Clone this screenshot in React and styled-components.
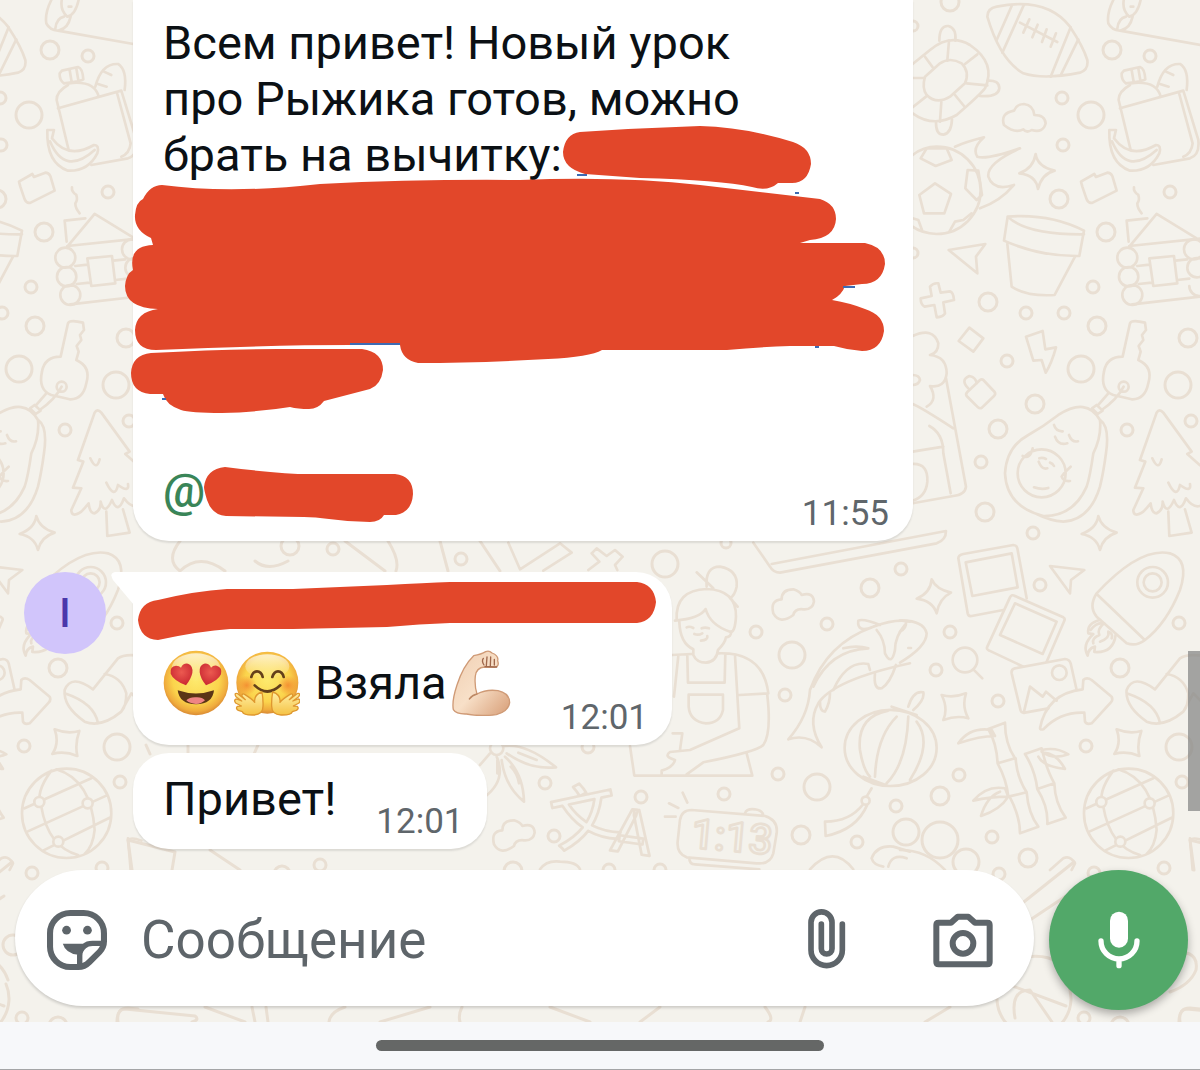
import React, { useState } from "react";
import styled, { createGlobalStyle } from "styled-components";

const GlobalStyle = createGlobalStyle`
  * {
    box-sizing: border-box;
  }

  body {
    margin: 0;
    font-family: Roboto, "Noto Sans", sans-serif;
    color: #0b1014;
  }

  button {
    padding: 0;
    border: 0;
    background: none;
    cursor: pointer;
  }

  svg {
    display: block;
  }
`;

const Screen = styled.div`
  display: flex;
  flex-direction: column;
  min-height: 100vh;
`;

const Chat = styled.main`
  position: relative;
  flex: 1;
  display: flex;
  flex-direction: column;
  justify-content: space-between;
  gap: 20px;
  overflow: hidden;
  background-color: #f4f2ec;
`;

const WallpaperSvg = styled.svg`
  position: absolute;
  inset: 0;
  width: 100%;
  height: 100%;
  fill: none;
  stroke: #e9dfd3;
  stroke-width: 8;
  stroke-linecap: round;
  stroke-linejoin: round;
`;

const ScrollThumb = styled.div`
  position: absolute;
  right: 0;
  top: 651px;
  width: 12px;
  height: 160px;
  background-color: rgba(128, 130, 130, 0.7);
`;

const Messages = styled.section`
  position: relative;
  display: flex;
  flex-direction: column;
  padding: 0 24px;
`;

const MessageRow = styled.article`
  display: grid;
  grid-template-columns: 82px minmax(0, 1fr);
  gap: 27px;
  margin-top: ${(props) => props.$space || "0"};
`;

const Avatar = styled.div`
  display: flex;
  align-items: center;
  justify-content: center;
  width: 82px;
  height: 82px;
  border-radius: 50%;
  font-size: 40px;
  font-weight: 500;
  color: #4a37ab;
  background-color: #d1c5fb;
`;

const Bubble = styled.div`
  position: relative;
  grid-column: 2;
  width: ${(props) => (props.$wide ? "100%" : "fit-content")};
  max-width: 780px;
  padding: ${(props) => props.$top || "0"} 24px 6px 30px;
  border-radius: ${(props) => props.$corners || "36px"};
  background-color: #fff;
  box-shadow: 0 2px 2px rgba(0, 0, 0, 0.1);
`;

const Tail = styled.svg`
  position: absolute;
  left: -22px;
  top: 0;
`;

const Paragraph = styled.p`
  max-width: 600px;
  min-height: 448px;
  margin: 0;
  font-size: 47px;
  line-height: 56px;
`;

const Line = styled.div`
  display: flex;
  align-items: flex-end;
  justify-content: space-between;
  gap: 40px;
`;

const Text = styled.div`
  display: flex;
  align-items: center;
  align-self: flex-start;
  gap: 5px;
  padding-bottom: ${(props) => (props.$tall ? "23px" : "16px")};
  font-size: 47px;
  line-height: 56px;
`;

const Word = styled.span`
  margin-left: ${(props) => (props.$indent ? "10px" : "0")};
`;

const Mention = styled.a`
  font-weight: 500;
  color: #3a8558;
  text-decoration: none;
`;

const Time = styled.time`
  font-size: 35px;
  line-height: 42px;
  color: #5f666b;
`;

const Sender = styled.div`
  width: 485px;
  height: 78px;
`;

const Scribble = styled.svg`
  position: absolute;
  left: 0;
  top: 0;
  overflow: visible;
  fill: #e2472a;
`;

const Composer = styled.form`
  position: relative;
  display: flex;
  align-items: flex-start;
  gap: 15px;
  padding: 0 12px 12px 15px;
`;

const InputPill = styled.div`
  flex: 1;
  display: flex;
  align-items: center;
  min-width: 0;
  height: 136px;
  padding: 4px 41px 0 32px;
  border-radius: 68px;
  background-color: #fff;
  box-shadow: 0 2px 3px rgba(0, 0, 0, 0.16);
`;

const MessageInput = styled.input`
  flex: 1;
  min-width: 0;
  height: 80px;
  margin: 0 32px 0 34px;
  padding: 0;
  border: 0;
  outline: 0;
  font-family: inherit;
  font-size: 53px;
  color: #0b1014;
  background: transparent;

  &::placeholder {
    color: #5e656a;
    opacity: 1;
  }
`;

const PillActions = styled.div`
  display: flex;
  align-items: center;
  gap: 87px;
`;

const IconButton = styled.button`
  color: #5e656a;
`;

const MicButton = styled.button`
  display: flex;
  align-items: center;
  justify-content: center;
  width: 139px;
  height: 140px;
  border-radius: 50%;
  color: #fff;
  background-color: #52a869;
  box-shadow: 0 4px 8px rgba(0, 0, 0, 0.3);
`;

const SystemBar = styled.footer`
  display: flex;
  align-items: center;
  justify-content: center;
  height: 48px;
  border-bottom: 1px solid #a4a5a6;
  background-color: #f7f8fa;
`;

const HomeHandle = styled.div`
  width: 448px;
  height: 11px;
  border-radius: 6px;
  background-color: #656766;
`;

// x, y, radius
const BUBBLES = [
  [950, 2, 9], [913, 26, 5], [1112, 50, 9], [1150, 56, 6], [1062, 98, 6],
  [1091, 115, 13], [1063, 145, 6], [1059, 199, 9], [1170, 192, 6],
  [1106, 232, 9], [913, 253, 5], [1093, 287, 6], [988, 302, 9],
  [1026, 313, 6], [1064, 313, 6], [1097, 326, 9], [1188, 338, 9],
  [1007, 361, 6], [1081, 369, 13], [1178, 385, 13], [1035, 404, 9],
  [998, 429, 9], [1127, 430, 6], [1191, 421, 6], [981, 462, 6],
  [985, 512, 9], [1033, 533, 6], [901, 569, 6], [1040, 585, 6],
  [950, 632, 6], [1179, 623, 6], [936, 670, 6], [998, 701, 6],
  [1120, 668, 9], [1086, 746, 6], [1179, 747, 13], [959, 775, 6],
  [940, 796, 9], [1182, 782, 6], [992, 837, 6], [1028, 858, 9],
  [906, 832, 13], [940, 840, 18], [966, 862, 13], [665, 564, 13],
  [726, 543, 5], [870, 588, 9], [756, 632, 6], [827, 624, 6],
  [792, 655, 13], [785, 695, 6], [588, 747, 6], [545, 783, 6],
  [641, 797, 6], [724, 794, 6], [778, 774, 6], [817, 787, 13],
  [554, 836, 6], [801, 835, 9], [857, 842, 6], [896, 806, 6],
  [513, 871, 9], [609, 870, 6], [660, 870, 6], [290, 546, 9],
  [333, 549, 6], [461, 559, 6], [320, 865, 6], [282, 874, 8],
  [999, 874, 6], [1164, 868, 6], [1094, 873, 6], [1084, 1018, 6],
  [1120, 1026, 9], [1075, 945, 10],
];

const TOP_DOODLES = [
  // football
  "M262 50Q262 25 290 20Q440-10 510 80Q550 140 562 180Q566 210 540 218Q430 240 370 220Q300 180 262 50z",
  "M335 18L290 120M372 14L307 158M512 82L452 230M535 118L482 226",
  "M360 68L472 126M388 58l-18 40M413 74l-16 38M440 88l-14 38M468 100l-16 40",
  // turtle
  "M38 192L90 150Q150 100 210 135Q290 190 255 265Q240 285 170 345Q100 385 38 340",
  "M75 230L120 190Q150 170 185 190Q210 215 195 250L150 290Q110 315 80 285Q65 265 75 230z",
  "M147 122L142 182M75 170L98 202M232 163L195 192M200 250L262 256M165 285L192 318M124 306L120 365M38 322L78 290M38 234H70",
  "M118 122Q118 76 145 78Q170 85 166 122M262 242Q298 240 298 265Q295 292 240 288M108 368Q108 404 130 404Q154 400 156 358",
  // cloud
  "M312 375Q300 340 342 332Q350 312 372 312Q400 315 403 345Q435 345 437 370Q430 400 395 390Q380 400 370 388Q345 402 312 375z",
  // burning ball
  "M38 465Q70 440 110 440A132 131 0 0 1 110 702Q65 700 38 680",
  "M58 585L105 550L153 582L133 640H72zM62 475L80 445H140L155 480L107 498zM203 510L235 512L246 585L230 600L196 565zM148 695L165 665L190 660L215 640M38 655L55 660L66 690",
  "M165 440Q200 425 252 412Q215 445 232 470Q260 480 360 445Q260 490 265 530Q280 575 342 555Q300 605 240 625",
  "M407 462Q412 500 464 512Q425 522 414 567Q408 525 358 520Q400 505 407 462z",
  // brick
  "M547 560L543 545L583 522L588 531L622 518Q632 518 637 528L650 572L578 608Q566 612 560 598z",
  // pot
  "M323 650Q450 640 552 692L538 768Q420 770 312 722zM323 650Q380 705 552 703M322 732L335 860Q380 890 464 885L525 770",
  "M146 750L256 732L228 770L232 820z",
  // bag with bottle and bread
  "M672 212L720 201Q734 205 736 238Q732 242 678 250Q664 240 665 220zM695 210l6 36M715 205l6 36",
  "M690 255Q655 275 656 300L692 450M692 250Q770 240 782 290M660 325L850 272L895 420Q900 465 870 475L760 495M838 282L878 430Q875 460 850 470",
  "M772 260Q790 190 840 192Q868 210 860 270M798 215l22 10M780 252l26 8",
  "M628 390H648L642 415Q690 480 768 435Q785 435 778 460Q750 515 690 512Q625 490 628 390zM636 424Q680 530 770 450",
  "M702 562Q700 575 715 585Q720 600 712 610Q712 625 725 640",
  // log cabin
  "M688 740L770 642L890 715M688 738L900 716M680 662L742 655M680 662L686 725M712 798L748 794M748 775L822 768L832 850L760 858zM826 782L862 778M716 852L755 848M832 840L868 836M697 913L915 888",
  "M652 773a30 30 0 1 0 60 0a30 30 0 1 0-60 0M657 830a29 29 0 1 0 58 0a29 29 0 1 0-58 0M667 885a30 30 0 1 0 60 0a30 30 0 1 0-60 0M852 748a30 30 0 1 0 60 0a30 30 0 1 0-60 0M862 803a29 29 0 1 0 58 0a29 29 0 1 0-58 0M868 858a30 30 0 1 0 60 0",
  // sandwich
  "M640 0Q620 40 625 70Q635 90 660 92L920 138M672-4Q665 30 688 50Q712 45 722 0M652 86Q655 55 678 50M665 90Q690 85 698 50M692 20h8",
];

const MIDDLE_DOODLES = [
  "M90 80Q100 68 115 70L122 98L150 94Q160 96 162 120L130 127L135 160Q130 170 110 172L103 135L74 140Q62 135 62 115L95 108z",
  "M208 203L250 235L220 275L176 243z",
  "M378 230L428 213L436 268L468 262Q455 310 437 338L425 300L400 302z",
  "M250 360L284 396Q288 402 282 408L246 443Q240 447 234 442L200 408Q196 402 202 396L240 360Q245 356 250 360M205 385Q180 360 208 348Q228 352 230 370",
  // chef house
  "M38 228Q100 200 115 250Q115 280 90 285Q140 290 140 340Q135 385 90 378Q115 420 80 440M38 432Q60 440 160 505M138 355L198 680Q195 705 160 708L38 730",
  "M88 498Q130 520 130 580L152 700M38 575L130 560M38 612Q85 610 82 665Q78 710 38 722M38 345q20 0 22 15q-5 15-22 15",
  // avocado
  "M475 465Q560 410 600 480Q605 530 580 580Q570 650 560 680Q520 770 430 768Q320 740 315 640Q320 560 385 525Q430 500 475 465zM600 480Q630 500 618 580Q610 640 600 680Q570 780 490 785Q450 782 410 762",
  "M353 640a72 72 0 1 0 144 0a72 72 0 1 0-144 0M368 588Q390 600 398 565M512 620Q490 640 485 650Q490 665 510 663M402 682Q425 690 445 684M416 605Q425 630 442 625M418 595q10-3 20 2M450 608q8 2 12 10M462 495Q468 515 488 514M465 530Q475 558 502 550M507 525Q515 548 534 544",
  // key
  "M668 290L690 190Q695 178 735 188L738 210L726 225L730 240L716 258L722 275L715 300Q760 320 745 370Q735 420 695 418L640 405Q600 390 612 335Q620 290 668 290zM656 380a15 15 0 1 0 30 0a15 15 0 1 0-30 0M671 380Q650 420 605 450M625 400L595 435M590 435L608 452L593 462L576 445z",
  // fir
  "M900 616L862 582L875 575L790 458Q778 444 770 458L720 600L736 605L705 683L730 685L700 750Q700 775 730 755Q740 745 752 730Q755 760 770 760Q790 750 788 725Q800 770 822 720Q840 765 858 715Q880 745 900 738M805 755L808 828L875 818L855 748M757 595Q775 635 785 598M805 668Q830 720 840 675Q875 700 870 672",
  "M595 768Q605 805 650 818Q610 830 600 870Q590 830 545 822Q590 805 595 768z",
];

const BOTTOM_DOODLES = [
  "M-440 38L-390 110Q-380 128-360 128L110 40Q138 30 138 3L-385 102",
  // photos
  "M310 240L215 258Q205 260 203 250L175 85Q175 75 190 72L340 45Q350 45 352 55L380 205M197 97L335 70L353 172L217 198z",
  "M345 198L490 262Q496 265 493 272L440 395M345 198Q335 192 330 202L262 350Q258 358 268 362L370 410M345 220L470 275L428 372L300 315z",
  "M445 535L375 548Q365 550 362 542L335 430Q333 418 345 415L495 387Q508 388 512 400L530 480M372 545L390 470L428 500L438 485L470 512M456 428a22 22 0 1 0 44 0a22 22 0 1 0-44 0",
  "M420 595Q440 490 548 478L550 450Q560 440 575 450L635 500Q640 510 632 518L575 580Q560 585 555 575L553 548Q480 545 430 598Q420 600 420 595z",
  "M450 108L553 120L513 150L510 190z",
  "M95 148Q108 178 153 188Q118 205 110 250Q98 212 50 206Q92 188 95 148z",
  "M125 495Q160 505 198 490Q185 530 205 565Q170 555 130 570Q145 535 125 495zM650 598Q688 613 724 603Q710 642 718 678Q680 662 643 672Q665 640 650 598z",
  // rocket
  "M590 190Q720 50 810 70Q870 90 840 180Q800 280 735 330Q710 350 680 340L590 260Q565 230 590 190zM590 192L732 328M712 157a46 46 0 1 0 92 0a46 46 0 1 0-92 0M731 157a27 27 0 1 0 54 0a27 27 0 1 0-54 0",
  "M600 270Q560 280 565 310L580 312Q545 345 563 377Q565 355 585 350L583 366Q640 370 647 315M572 300Q590 275 612 280Q590 300 598 315Q575 325 580 340M600 335Q630 325 625 305Q640 310 635 325",
  // boot
  "M910 378Q860 370 840 385L765 478Q700 430 680 480Q675 530 740 575Q790 595 850 545L880 490L910 520M680 490Q770 520 780 580M800 432Q850 440 865 490Q865 530 850 545",
  "M158 390a37 37 0 1 0 74 0a37 37 0 1 0-74 0M220 418L247 445",
  "M0 272Q70 270 80 310Q80 350 0 398M0 305Q20 295 18 275M25 354h8",
  // bamboo
  "M265 597L315 578Q315 640 345 685L293 700Q290 640 265 597zM293 700Q320 750 325 800L380 787Q350 740 347 685M330 802Q360 860 360 910L415 890Q385 850 380 787M175 640Q210 590 275 600L285 618Q240 618 175 640z",
  "M375 672L425 655Q440 720 463 760L412 777Q405 720 375 672zM412 777Q445 830 442 882L497 863Q465 820 463 760M425 660Q470 650 505 673Q460 690 425 665M415 680Q430 710 495 717Q470 670 430 668M220 812Q260 765 315 775L325 800Q270 800 220 812zM325 800Q300 840 243 858Q260 800 300 785",
  // globe
  "M552 850a134 134 0 1 0 268 0a134 134 0 1 0-268 0M560 835L760 745M568 905L805 797M615 962L818 862M640 722Q590 790 610 830Q630 950 720 975M655 718Q760 750 770 900Q765 950 740 972",
  "M450 1020L490 985Q510 975 525 1000L515 1020M870 930Q880 920 910 932M870 925L878 1020M0 960Q80 960 135 1020",
];

const CENTER_DOODLES = [
  // barista
  "M680 170Q675 110 720 110Q775 120 770 170Q765 195 750 205M650 127L700 175M755 210l18 20M590 270Q585 180 680 177Q770 180 768 260Q765 310 750 305Q690 285 677 237Q660 265 585 272",
  "M598 275Q600 340 640 358V375Q650 398 678 398Q710 395 714 360Q735 340 738 322Q755 320 753 305M643 312q12 5 24-2M682 318Q685 330 663 332M620 292q8-4 20 2M665 295q10-4 22 0",
  "M576 375L635 372M715 370Q850 365 865 490L778 495M862 495Q875 610 850 645Q830 665 670 697L620 733M765 375L778 595L630 660L570 666Q550 680 585 690Q580 712 545 722V733M595 378L582 500M622 378L624 458H734L736 372M626 494H729V540Q720 580 678 580Q630 575 626 530zM450 648L463 737H817L800 670M578 610H607L600 660",
  // clouds
  "M880 250Q870 210 905 208Q905 178 940 178Q960 185 965 195Q1000 185 1002 215Q998 240 970 238Q945 235 940 255Q900 285 880 250z",
  "M42 943Q32 903 67 901Q67 871 102 871Q122 878 127 888Q162 878 164 908Q160 933 132 931Q107 928 102 948Q62 978 42 943z",
  // flower
  "M30 655a20 20 0 1 0 40 0a20 20 0 1 0-40 0M75 648Q140 640 228 712Q150 720 80 670M115 668L170 690M50 680Q80 750 15 800M52 690V730M75 680Q130 730 132 815Q75 770 65 690M92 710q20 20 25 50M30 670L0 705",
  // koi
  "M925 628Q985 560 990 480Q1040 340 1180 290Q1250 265 1290 275M925 628Q980 610 1025 652Q980 580 1015 520Q1060 450 1290 400M1180 290Q1130 310 1135 272Q1150 265 1200 285M1090 355Q1130 345 1165 355Q1050 360 1000 470",
  "M1185 430Q1180 480 1205 475Q1230 460 1248 405M1190 300Q1215 330 1215 370Q1235 410 1245 360Q1245 320 1275 285M1020 515Q1020 545 1035 545Q1050 520 1050 490M1060 480Q1100 390 1165 402L1170 420",
  // lantern
  "M1094 654a138 114 0 1 0 276 0a138 114 0 1 0-276 0M1225 542Q1130 560 1140 660Q1150 720 1170 740M1250 560Q1190 620 1185 740M1285 560Q1280 700 1220 760M1310 575Q1360 640 1290 750M1235 530L1310 555M1150 740L1225 768M1285 530Q1300 480 1330 487Q1335 510 1300 540",
  "M1175 775L1160 800M1145 812a12 12 0 1 0 24 0a12 12 0 1 0-24 0M1150 822Q1110 875 1035 875L1037 918Q1130 900 1162 824",
  // alarm clock
  "M635 840L855 858Q895 870 890 910L880 970Q870 1004 830 1000L620 982Q590 970 593 935L600 870Q605 840 635 840zM795 850Q800 835 825 838Q850 842 850 858M628 985Q628 1003 645 1003L838 1018M608 788l14 30M567 820l28 14M555 860h32",
  "M85 38L120 118L240 40L275 68L190 122M335 70L350 55L380 78L405 60L428 80L405 105L412 120M335 70L358 95L325 120",
  "M180 1018Q200 990 240 995Q290 995 300 1018M990 1018Q1060 940 1120 1018M1175 985Q1190 945 1240 950L1290 965M1175 985Q1180 1005 1210 1010M1225 1010Q1235 970 1280 985",
];

const EDGE_DOODLES = [
  "M180 541Q165 560 180 571M345 541L385 571M388 541Q400 560 396 571M440 541L448 571M480 541L500 571M180 571Q200 552 225 571M255 561Q268 572 288 561",
  "M128 840L175 852L172 870M128 840L132 870M210 850L240 870M258 745L254 754M188 745V754M146 745L150 754",
  "M117 1022Q117 1009 125 1009L195 1016Q200 1020 192 1022M205 1007L245 1022M252 1007l3 15M266 1007l2 15M345 1007Q330 1012 329 1022M430 1007L380 1022M462 1007Q458 1015 460 1022M550 1007L590 1022M640 1022L660 1007M765 1007Q775 1020 768 1022M805 1007L800 1022M950 1007L925 1022",
  "M1000 984a37 37 0 1 0 68 0M1020 958Q1060 950 1070 980M1010 985L1066 1006M1015 1018Q1010 990 1030 990L1052 1022M1020 905L1074 862M1030 920L1066 896M1160 955Q1200 945 1196 970Q1190 985 1170 992M1180 1022Q1178 1008 1190 1008L1200 1009",
];

function Wallpaper() {
  return (
    <WallpaperSvg aria-hidden="true">
      <defs>
        <g id="doodles">
          <g strokeWidth="3">
            {BUBBLES.map(([x, y, r]) => (
              <circle key={`${x}-${y}`} cx={x} cy={y} r={r} />
            ))}
            {EDGE_DOODLES.map((d) => (
              <path key={d} d={d} />
            ))}
          </g>
          <g transform="translate(900 0) scale(.3333)">
            {TOP_DOODLES.map((d) => (
              <path key={d} d={d} />
            ))}
          </g>
          <g transform="translate(900 260) scale(.3333)">
            {MIDDLE_DOODLES.map((d) => (
              <path key={d} d={d} />
            ))}
          </g>
          <g transform="translate(900 530) scale(.3333)">
            {BOTTOM_DOODLES.map((d) => (
              <path key={d} d={d} />
            ))}
            <g fill="#f4f2ec">
              <circle cx="604" cy="816" r="15" />
              <circle cx="749" cy="820" r="15" />
              <circle cx="661" cy="935" r="15" />
            </g>
          </g>
          <g transform="translate(480 530) scale(.3333)">
            {CENTER_DOODLES.map((d) => (
              <path key={d} d={d} />
            ))}
            <g fontFamily="Roboto, sans-serif" fontWeight="500">
              <text
                x="215"
                y="930"
                fontSize="200"
                fontFamily="Noto Sans CJK SC, sans-serif"
                transform="rotate(-12 315 860)"
              >
                文
              </text>
              <text x="398" y="970" fontSize="185" transform="rotate(8 460 900)">
                A
              </text>
              <text x="634" y="962" fontSize="124" transform="rotate(5 740 920)">
                1:13
              </text>
            </g>
          </g>
        </g>
      </defs>
      <use href="#doodles" />
      <use href="#doodles" x="-1062" />
      <use href="#doodles" x="1062" />
    </WallpaperSvg>
  );
}

function MessageScribble() {
  return (
    <Scribble width="780" height="541" viewBox="133 0 780 541" aria-hidden="true">
      <path d="M580 132Q640 128 700 126Q745 127 793 142Q811 148 811 164Q808 183 792 183L778 183Q768 192 752 187Q720 180 640 178L585 174Q563 168 563 152Q565 134 580 132z" />
      <path d="M162 185Q230 194 320 184Q420 179 520 180Q620 176 700 185L820 199Q836 204 836 219Q835 238 810 240L800 243H865Q885 247 885 264Q882 284 862 284L845 286Q842 295 832 300Q850 303 865 309Q884 315 884 331Q881 351 862 351Q848 350 834 346H790Q760 347 727 350H602Q590 357 548 359Q477 363 418 363Q402 360 400 345H350Q270 345 156 350Q135 350 135 330Q136 312 158 309Q125 308 125 286Q126 274 133 270Q128 246 153 245L151 238Q134 230 135 215Q136 202 143 199Q150 185 162 185z" />
      <path d="M151 353Q220 349 278 349H362Q383 352 383 370Q381 385 370 389L324 401Q318 409 309 409Q298 409 290 407Q260 412 222 413Q190 413 181 410Q166 405 163 394H150Q131 392 131 373Q132 355 151 353z" />
      <path d="M225 467Q280 474 309 474H395Q413 476 413 494Q412 512 396 515H384Q380 522 370 522Q350 522 329 519Q315 517 304 517L226 516Q212 515 207 500Q204 490 204 487Q206 469 225 467z" />
      <path
        d="M577 175h10M843 287h12M350 344h50M162 399h4M795 193h4M815 347h4"
        stroke="#3d6bb3"
        strokeWidth="2"
      />
    </Scribble>
  );
}

function SenderScribble() {
  return (
    <Scribble width="539" height="173" viewBox="133 572 539 173" aria-hidden="true">
      <path d="M158 600Q195 591 227 589L293 589L387 585Q425 583 450 582H637Q654 584 656 602Q654 621 637 623H450Q420 624 387 627L293 629H230Q200 631 158 640Q140 639 138 620Q140 602 158 600z" />
    </Scribble>
  );
}

function HeartEyesEmoji() {
  return (
    <svg width="66" height="66" viewBox="160 270 198 198" role="img" aria-label="😍">
      <defs>
        <radialGradient id="face" cx=".5" cy=".45" r=".55">
          <stop offset="0" stopColor="#fdea6e" />
          <stop offset=".65" stopColor="#fbd44c" />
          <stop offset=".88" stopColor="#f0ac3d" />
          <stop offset="1" stopColor="#d98a34" />
        </radialGradient>
        <linearGradient id="shine" x1="0" y1="0" x2="0" y2="1">
          <stop offset="0" stopColor="#fff" stopOpacity=".7" />
          <stop offset="1" stopColor="#fff" stopOpacity="0" />
        </linearGradient>
        <radialGradient id="heart" cx=".5" cy=".4" r=".6">
          <stop offset="0" stopColor="#ec5a50" />
          <stop offset="1" stopColor="#cb2932" />
        </radialGradient>
      </defs>
      <circle cx="259" cy="369" r="97" fill="url(#face)" />
      <ellipse cx="259" cy="322" rx="72" ry="42" fill="url(#shine)" />
      <g fill="url(#heart)">
        <path d="M229 376Q190 360 183 341Q180 318 199 317Q209 317 214 323Q220 309 235 311Q251 317 248 339Q244 357 229 376z" />
        <path d="M289 376Q272 355 270 337Q268 316 283 311Q298 309 304 323Q311 315 321 317Q339 322 334 343Q326 362 289 376z" />
      </g>
      <path d="M204 391Q259 410 313 391Q309 432 259 433Q209 432 204 391z" fill="#5b3516" />
      <path d="M230 421Q240 411 259 412Q278 411 286 421Q275 432 259 432Q240 431 230 421z" fill="#ef8584" />
    </svg>
  );
}

function HuggingEmoji() {
  return (
    <svg width="66" height="66" viewBox="371 271 198 198" role="img" aria-label="🤗">
      <defs>
        <radialGradient id="blush">
          <stop offset="0" stopColor="#f38a30" stopOpacity=".9" />
          <stop offset="1" stopColor="#f38a30" stopOpacity="0" />
        </radialGradient>
        <linearGradient id="hand" x1="0" y1="0" x2="0" y2="1">
          <stop offset="0" stopColor="#fff0a5" />
          <stop offset="1" stopColor="#f5c244" />
        </linearGradient>
      </defs>
      <circle cx="471" cy="369" r="93" fill="url(#face)" />
      <ellipse cx="471" cy="320" rx="66" ry="36" fill="url(#shine)" />
      <circle cx="409" cy="377" r="30" fill="url(#blush)" />
      <circle cx="533" cy="377" r="30" fill="url(#blush)" />
      <g fill="none" stroke="#64401a" strokeWidth="8" strokeLinecap="round">
        <path d="M423 352Q428 335 440 335Q453 335 457 352M486 352Q491 335 503 335Q516 335 520 352" />
        <path d="M433 377Q471 414 510 377" />
      </g>
      <path
        id="hug-hand"
        d="M455 397Q430 405 433 428Q425 418 404 405Q394 399 395 410L405 420L382 402Q370 399 377 411L394 424L378 418Q369 421 376 430L393 439L381 440Q375 447 384 452L396 456Q400 467 430 466Q458 465 458 440Q459 420 455 397z"
        fill="url(#hand)"
        stroke="#df982f"
        strokeWidth="4"
        strokeLinejoin="round"
      />
      <use href="#hug-hand" transform="matrix(-1 0 0 1 942 0)" />
    </svg>
  );
}

function BicepsEmoji() {
  return (
    <svg width="60" height="66" viewBox="1027 267 180 198" role="img" aria-label="💪🏻">
      <defs>
        <linearGradient id="skin" x1="0" y1="0" x2="1" y2="1">
          <stop offset="0" stopColor="#efceb2" />
          <stop offset=".5" stopColor="#f8e0c8" />
          <stop offset="1" stopColor="#d79d76" />
        </linearGradient>
      </defs>
      <path
        d="M1092 284Q1115 280 1128 272Q1138 267 1147 276Q1168 284 1164 299Q1170 316 1155 319L1124 318Q1100 320 1097 345Q1094 375 1102 399Q1130 384 1165 389Q1200 397 1200 425Q1196 452 1160 461Q1110 467 1070 459Q1040 460 1031 446Q1026 420 1042 372Q1060 315 1092 284z"
        fill="url(#skin)"
        stroke="#cf9a76"
        strokeWidth="4"
        strokeLinejoin="round"
      />
      <g fill="none" stroke="#9f674b" strokeWidth="4" strokeLinecap="round">
        <path d="M1121 292Q1115 300 1123 312M1132 288L1130 314M1143 288L1142 314M1154 295V312M1126 317L1161 318" />
        <path d="M1102 399Q1088 402 1079 414" stroke="#bd8864" />
      </g>
    </svg>
  );
}

function StickerIcon() {
  return (
    <svg width="60" height="60" viewBox="141 153 178 178" aria-hidden="true">
      <g fill="none" stroke="currentColor" strokeWidth="18" strokeLinejoin="round">
        <path d="M210 162H250A60 60 0 0 1 310 222V246Q310 264 297 277L266 308Q252 322 234 322H210A60 60 0 0 1 150 262V222A60 60 0 0 1 210 162z" />
        <path d="M310 252H276Q260 252 252 260Q238 272 238 288V322" strokeWidth="16" />
      </g>
      <g fill="currentColor">
        <circle cx="199" cy="213" r="13" />
        <circle cx="261" cy="213" r="13" />
        <path d="M188 253H252L234 286Q196 282 188 253z" />
      </g>
    </svg>
  );
}

function AttachIcon() {
  return (
    <svg width="38" height="60" viewBox="143 150 114 180" overflow="visible" aria-hidden="true">
      <path
        d="M246 192V270A47 47 0 0 1 152 270V187A31 31 0 0 1 215 187V266A16 16 0 0 1 183 266V192"
        fill="none"
        stroke="currentColor"
        strokeWidth="17"
        strokeLinecap="round"
      />
    </svg>
  );
}

function CameraIcon() {
  return (
    <svg width="60" height="60" viewBox="519 151 180 180" aria-hidden="true">
      <g fill="none" stroke="currentColor" strokeWidth="18" strokeLinejoin="round">
        <path d="M529 196Q529 189 536 189H573L593 171H625L645 189H682Q689 189 689 196V307Q689 314 682 314H536Q529 314 529 307z" />
        <circle cx="609" cy="251" r="31" />
      </g>
    </svg>
  );
}

function MicIcon() {
  return (
    <svg width="42" height="58" viewBox="1012 151 126 174" aria-hidden="true">
      <rect x="1048" y="153" width="54" height="108" rx="27" fill="currentColor" />
      <path
        d="M1021 241A54 54 0 0 0 1129 241M1075 295V315"
        fill="none"
        stroke="currentColor"
        strokeWidth="16"
        strokeLinecap="round"
      />
    </svg>
  );
}

function App() {
  const [message, setMessage] = useState("");

  return (
    <>
      <GlobalStyle />
      <Screen>
        <Chat>
          <Wallpaper />
          <Messages>
            <MessageRow>
              <Bubble $wide $top="15px" $corners="0 0 36px 36px">
                <Paragraph>
                  Всем привет! Новый урок про Рыжика готов, можно брать на
                  вычитку:
                </Paragraph>
                <Line>
                  <Text>
                    <Mention href="#mention">@</Mention>
                  </Text>
                  <Time>11:55</Time>
                </Line>
                <MessageScribble />
              </Bubble>
            </MessageRow>

            <MessageRow $space="31px">
              <Avatar>I</Avatar>
              <Bubble $corners="0 36px 36px 36px">
                <Tail width="23" height="34" viewBox="0 0 23 34" aria-hidden="true">
                  <path d="M23 0H4Q-2 1 2 8L23 33z" fill="#fff" />
                </Tail>
                <Sender />
                <Line>
                  <Text $tall>
                    <HeartEyesEmoji />
                    <HuggingEmoji />
                    <Word $indent>Взяла</Word>
                    <BicepsEmoji />
                  </Text>
                  <Time>12:01</Time>
                </Line>
                <SenderScribble />
              </Bubble>
            </MessageRow>

            <MessageRow $space="8px">
              <Bubble $top="18px">
                <Line>
                  <Text>Привет!</Text>
                  <Time>12:01</Time>
                </Line>
              </Bubble>
            </MessageRow>
          </Messages>

          <Composer onSubmit={(e) => e.preventDefault()}>
            <InputPill>
              <IconButton type="button" aria-label="Стикеры">
                <StickerIcon />
              </IconButton>
              <MessageInput
                type="text"
                aria-label="Сообщение"
                placeholder="Сообщение"
                value={message}
                onChange={(e) => setMessage(e.target.value)}
              />
              <PillActions>
                <IconButton type="button" aria-label="Прикрепить">
                  <AttachIcon />
                </IconButton>
                <IconButton type="button" aria-label="Камера">
                  <CameraIcon />
                </IconButton>
              </PillActions>
            </InputPill>
            <MicButton type="button" aria-label="Голосовое сообщение">
              <MicIcon />
            </MicButton>
          </Composer>
          <ScrollThumb />
        </Chat>
        <SystemBar>
          <HomeHandle />
        </SystemBar>
      </Screen>
    </>
  );
}

export default App;
